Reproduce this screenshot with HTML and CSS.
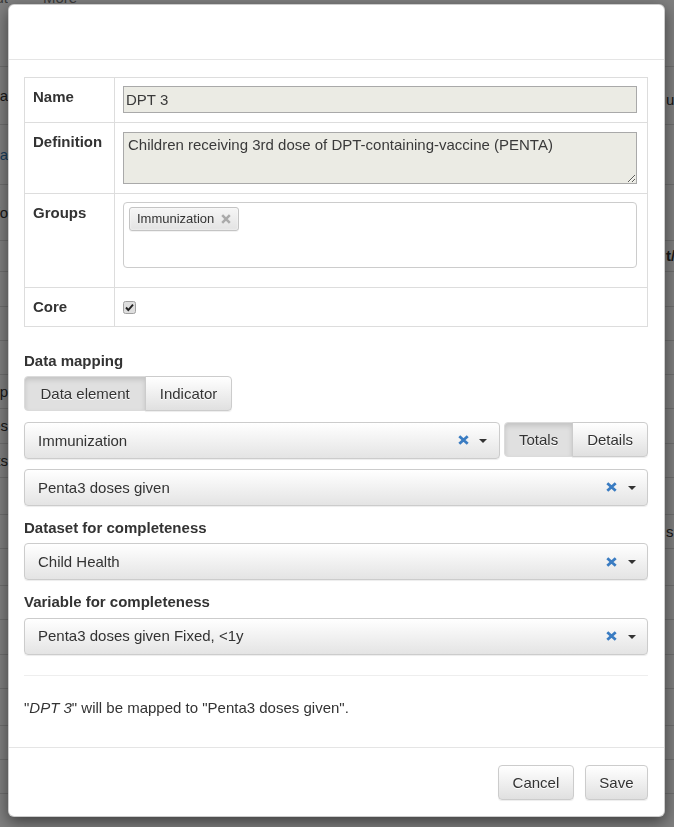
FILE: index.html
```html
<!DOCTYPE html>
<html lang="en">
<head>
<meta charset="utf-8">
<title>Indicator mapping</title>
<link rel="stylesheet" href="styles.css">
</head>
<body>
<div class="page">
  <div class="topnav">
    <span class="lc">About</span>
    <span class="nav-more">More</span>
  </div>
  <div class="r h58"><span class="lc">Data</span><span class="mid"></span><span class="rc rc-low">us</span></div>
  <div class="r h60"><span class="lc link">Formula</span><span class="mid"></span><span class="rc"></span></div>
  <div class="r h56"><span class="lc">Info</span><span class="mid"></span><span class="rc"></span></div>
  <div class="r h31"><span class="lc"></span><span class="mid"></span><span class="rc bold">t/Total</span></div>
  <div class="r h35"><span class="lc"></span><span class="mid"></span></div>
  <div class="r h34"><span class="lc"></span><span class="mid"></span></div>
  <div class="r h34"><span class="lc"></span><span class="mid"></span></div>
  <div class="r h34"><span class="lc">Group</span><span class="mid"></span></div>
  <div class="r h35"><span class="lc">Doses</span><span class="mid"></span></div>
  <div class="r h34"><span class="lc">Counts</span><span class="mid"></span></div>
  <div class="r h37"><span class="lc"></span><span class="mid"></span></div>
  <div class="r h34"><span class="lc"></span><span class="mid"></span><span class="rc">s given</span></div>
  <div class="r h37"><span class="lc"></span><span class="mid"></span></div>
  <div class="r h34"><span class="lc"></span><span class="mid"></span></div>
  <div class="r h35"><span class="lc"></span><span class="mid"></span></div>
  <div class="r h34"><span class="lc"></span><span class="mid"></span></div>
  <div class="r h37"><span class="lc"></span><span class="mid"></span></div>
  <div class="r h34"><span class="lc"></span><span class="mid"></span></div>
  <div class="r h34"><span class="lc"></span><span class="mid"></span></div>
  <div class="r h34"><span class="lc"></span><span class="mid"></span></div>
</div>

<div class="backdrop"></div>

<div class="modal">
  <div class="modal-header"></div>
  <div class="modal-body">
    <table class="props">
      <tr>
        <td class="lbl">Name</td>
        <td class="val"><input class="ro-input" type="text" value="DPT 3" readonly></td>
      </tr>
      <tr>
        <td class="lbl">Definition</td>
        <td class="val val-def"><textarea class="ro-area" readonly>Children receiving 3rd dose of DPT-containing-vaccine (PENTA)</textarea></td>
      </tr>
      <tr>
        <td class="lbl">Groups</td>
        <td class="val">
          <div class="tags">
            <span class="tag">Immunization
              <svg class="tag-x" width="10" height="10" viewBox="0 0 10 10"><path d="M1.2 1.2L8.8 8.8M8.8 1.2L1.2 8.8" stroke="#aaa" stroke-width="2.5"/></svg>
            </span>
          </div>
        </td>
      </tr>
      <tr>
        <td class="lbl">Core</td>
        <td class="val">
          <span class="chk"><svg width="13" height="13" viewBox="0 0 13 13"><rect x="0.5" y="0.5" width="12" height="12" rx="2" fill="#dedede" stroke="#a0a0a0"/><path d="M3 6.5L5.3 9L10 3.6" fill="none" stroke="#222" stroke-width="1.9"/></svg></span>
        </td>
      </tr>
    </table>

    <div class="fg fg-first">
      <div class="fg-label">Data mapping</div>
      <div class="btn-group">
        <span class="btn active btn-de">Data element</span><span class="btn btn-ind">Indicator</span>
      </div>
      <div class="dm-row">
        <div class="sel">
          <span class="sel-val">Immunization</span>
          <svg class="sel-x" width="11" height="10" viewBox="0 0 11 10"><path d="M1.3 1.2L9.7 8.8M9.7 1.2L1.3 8.8" stroke="#3a7cc2" stroke-width="2.8"/></svg>
          <span class="caret"></span>
        </div>
        <div class="btn-group">
          <span class="btn active">Totals</span><span class="btn">Details</span>
        </div>
      </div>
      <div class="sel">
        <span class="sel-val">Penta3 doses given</span>
        <svg class="sel-x" width="11" height="10" viewBox="0 0 11 10"><path d="M1.3 1.2L9.7 8.8M9.7 1.2L1.3 8.8" stroke="#3a7cc2" stroke-width="2.8"/></svg>
        <span class="caret"></span>
      </div>
    </div>

    <div class="fg">
      <div class="fg-label">Dataset for completeness</div>
      <div class="sel">
        <span class="sel-val">Child Health</span>
        <svg class="sel-x" width="11" height="10" viewBox="0 0 11 10"><path d="M1.3 1.2L9.7 8.8M9.7 1.2L1.3 8.8" stroke="#3a7cc2" stroke-width="2.8"/></svg>
        <span class="caret"></span>
      </div>
    </div>

    <div class="fg fg-last">
      <div class="fg-label">Variable for completeness</div>
      <div class="sel">
        <span class="sel-val">Penta3 doses given Fixed, &lt;1y</span>
        <svg class="sel-x" width="11" height="10" viewBox="0 0 11 10"><path d="M1.3 1.2L9.7 8.8M9.7 1.2L1.3 8.8" stroke="#3a7cc2" stroke-width="2.8"/></svg>
        <span class="caret"></span>
      </div>
    </div>

    <hr class="sep">
    <p class="summary">"<em>DPT 3</em>" will be mapped to "Penta3 doses given".</p>
  </div>
  <div class="modal-footer">
    <span class="btn btn-foot">Cancel</span>
    <span class="btn btn-foot">Save</span>
  </div>
</div>
</body>
</html>
```

FILE: styles.css
```css
* { box-sizing: border-box; }

html, body {
  margin: 0;
  height: 827px;
  overflow: hidden;
}

body {
  font-family: "Liberation Sans", Arial, sans-serif;
  font-size: 15px;
  line-height: 21.4px;
  color: #333;
  background: #fff;
  position: relative;
}

/* ---------- page behind the dialog ---------- */
.page {
  width: 674px;
}

.topnav {
  height: 79px;
  display: flex;
  align-items: flex-start;
  margin-top: -13px;
  color: #777;
}

.topnav .nav-more {
  margin-left: 35px;
}

.r {
  display: flex;
  align-items: center;
  border-top: 1px solid #ddd;
  height: 34px;
}

.h31 { height: 31px; }
.h34 { height: 34px; }
.h35 { height: 35px; }
.h37 { height: 37px; }
.h56 { height: 56px; }
.h58 { height: 58px; }
.h60 { height: 60px; }

.lc {
  width: 8px;
  flex: none;
  overflow: hidden;
  display: flex;
  justify-content: flex-end;
  white-space: nowrap;
}

.lc.link { color: #337ab7; }

.mid {
  width: 658px;
  flex: none;
}

.rc {
  white-space: nowrap;
}

.rc-low { margin-top: 8px; }

.rc.bold { font-weight: bold; }

.backdrop {
  position: fixed;
  inset: 0;
  background: rgba(0, 0, 0, 0.5);
}

/* ---------- dialog ---------- */
.modal {
  position: absolute;
  top: 4px;
  left: 8px;
  width: 657px;
  background: #fff;
  border: 1px solid rgba(0, 0, 0, 0.2);
  border-radius: 6px;
  box-shadow: 0 5px 15px rgba(0, 0, 0, 0.5);
}

.modal-header {
  height: 55px;
  border-bottom: 1px solid #e5e5e5;
}

.modal-body {
  padding: 17px 16px 28.6px 15px;
}

.props {
  width: 100%;
  border-collapse: collapse;
  border: 1px solid #ddd;
}

.props td {
  border: 1px solid #ddd;
  padding: 8px 8px 9px;
  vertical-align: top;
}

.props td.lbl {
  width: 90px;
  font-weight: bold;
}

.props td.val {
  padding-right: 10px;
}

.ro-input {
  display: block;
  width: 100%;
  height: 27px;
  margin: 0;
  padding: 1px 2px;
  border: 1px solid #a9a9a9;
  background: #ebebe4;
  font: 15px "Liberation Sans", Arial, sans-serif;
  color: #3a3a3a;
  outline: none;
}

.ro-area {
  display: block;
  width: 100%;
  height: 52px;
  margin: 1px 0 0;
  padding: 3px 4px;
  border: 1px solid #a9a9a9;
  background: #ebebe4;
  font: 15px/17px "Liberation Sans", Arial, sans-serif;
  color: #3a3a3a;
  resize: both;
  outline: none;
}

.tags {
  height: 66px;
  margin-bottom: 10px;
  padding: 4px 5px;
  border: 1px solid #ccc;
  border-radius: 4px;
  background: #fff;
}

.tag {
  display: inline-flex;
  align-items: center;
  gap: 7px;
  height: 24px;
  padding: 0 7px 0 7px;
  border: 1px solid #c4c4c4;
  border-radius: 3px;
  background: linear-gradient(#f6f6f6, #e3e3e3);
  box-shadow: inset 0 0 2px #fff, 0 1px 0 rgba(0, 0, 0, 0.05);
  font-size: 13px;
  line-height: 16px;
  color: #333;
}

.tag-x { display: block; margin-top: -1px; }

.chk {
  display: inline-block;
  width: 13px;
  height: 13px;
  vertical-align: -2px;
}

.chk svg { display: block; }

/* ---------- form groups ---------- */
.fg {
  margin-bottom: 11px;
}

.fg-first {
  margin-top: 23px;
}

.fg-label {
  font-weight: bold;
  margin-bottom: 5px;
}

.fg-first .fg-label {
  margin-bottom: 4px;
}

.btn-group {
  display: inline-flex;
  vertical-align: top;
}

.btn {
  display: inline-block;
  padding: 6px 14px;
  font-size: 15px;
  line-height: 21px;
  color: #333;
  border: 1px solid #ccc;
  border-radius: 4px;
  background: linear-gradient(#fff, #e0e0e0);
  text-shadow: 0 1px 0 #fff;
  box-shadow: inset 0 1px 0 rgba(255, 255, 255, 0.15), 0 1px 1px rgba(0, 0, 0, 0.075);
  white-space: nowrap;
}

.btn.active {
  background: #e0e0e0;
  border-color: #dbdbdb;
  box-shadow: inset 0 3px 5px rgba(0, 0, 0, 0.125);
}

.btn-group .btn:first-child {
  border-top-right-radius: 0;
  border-bottom-right-radius: 0;
}

.btn-group .btn + .btn {
  margin-left: -1px;
  border-top-left-radius: 0;
  border-bottom-left-radius: 0;
}

.btn-de { padding: 6px 15.5px; }
.btn-ind { padding: 6px 13.5px; }

.dm-row .btn { padding: 6px 14px; }

.dm-row {
  display: flex;
  align-items: flex-start;
  gap: 4px;
  margin: 11px 0 10px;
}

.sel {
  flex: 1;
  display: flex;
  align-items: center;
  height: 37px;
  padding: 0 11.5px 0 13px;
  border: 1px solid #ccc;
  border-radius: 4px;
  background: linear-gradient(#fff, #e4e4e4);
  box-shadow: 0 1px 1px rgba(0, 0, 0, 0.075);
}

.sel-val {
  flex: 1;
  white-space: nowrap;
  overflow: hidden;
}

.sel-x {
  display: block;
  margin-right: 10.5px;
}

.caret {
  width: 0;
  height: 0;
  border-top: 4px solid #333;
  border-left: 4px solid transparent;
  border-right: 4px solid transparent;
  margin-top: 1px;
}

.sep {
  margin: 20.2px 0 21px;
  border: 0;
  border-top: 1px solid #eee;
}

.summary {
  margin: 0;
}

.modal-footer {
  display: flex;
  justify-content: flex-end;
  gap: 11px;
  padding: 17px 16px 16px 15px;
  border-top: 1px solid #e5e5e5;
}

.btn-foot {
  padding: 6px 13.5px;
}
```
